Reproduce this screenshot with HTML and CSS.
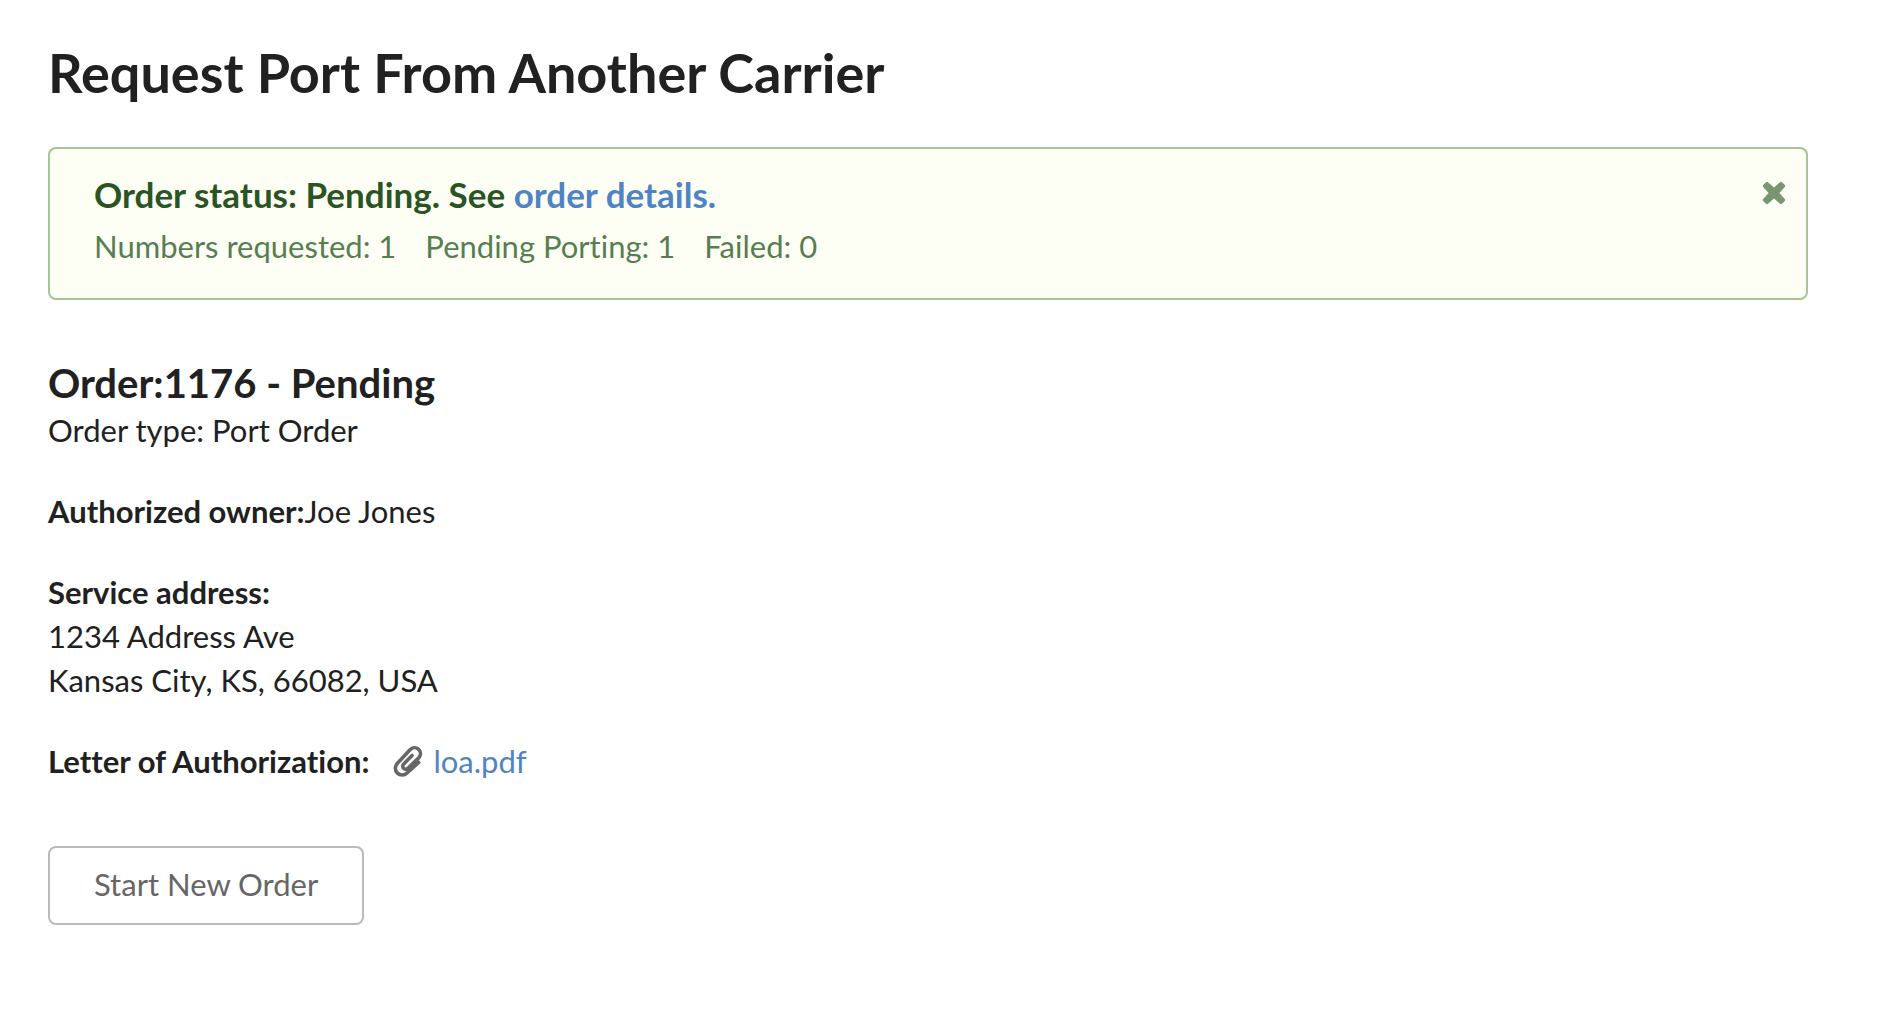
FILE: index.html
```html
<!DOCTYPE html>
<html lang="en">
<head>
<meta charset="utf-8">
<title>Request Port From Another Carrier</title>
<link rel="stylesheet" href="styles.css">
</head>
<body>
<main class="page">
  <h1 class="page-title">Request Port From Another Carrier</h1>
  <section class="message">
    <div class="message-body">
      <h2 class="message-header">Order status: Pending. See <a href="#details">order details.</a></h2>
      <p class="message-counts"><span>Numbers requested: 1</span><span>Pending Porting: 1</span><span>Failed: 0</span></p>
    </div>
    <button class="close" type="button" aria-label="Close">
      <svg viewBox="0 0 24 24" width="24" height="24" aria-hidden="true"><path d="M6 1.200 12 6.600 18 1.200Q19 .4 20 1.200L22.800 4Q23.600 5 22.800 6L17.400 12 22.800 18Q23.600 19 22.800 20L20 22.800Q19 23.600 18 22.800L12 17.400 6 22.800Q5 23.600 4 22.800L1.200 20Q.4 19 1.200 18L6.600 12 1.200 6Q.4 5 1.200 4L4 1.200Q5 .4 6 1.200Z"/></svg>
    </button>
  </section>
  <section class="order" id="details">
    <h2 class="order-title">Order:1176 - Pending</h2>
    <p class="block">Order type: Port Order</p>
    <p class="block"><strong>Authorized owner:</strong>Joe Jones</p>
    <address class="block"><strong>Service address:</strong><br>1234 Address Ave<br>Kansas City, KS, 66082, USA</address>
    <p class="block attachment"><strong>Letter of Authorization:</strong>
      <svg class="clip" viewBox="0 0 30 32" width="30" height="32" aria-hidden="true"><path stroke-width="3.6" d="M25.700 17.500 14 28A6.600 6.600 0 0 1 4.300 18.500L17 4.800A5.500 5.500 0 0 1 26 12.500L15 23.200A2.900 2.900 0 0 1 10.500 19.200L19 10.500"/></svg>
      <a href="#loa">loa.pdf</a></p>
  </section>
  <button class="start" type="button">Start New Order</button>
</main>
</body>
</html>
```

FILE: styles.css
```css
* { box-sizing: border-box; }
body { margin: 0; background: #fff; color: #212121; font: 31px/44px Lato, sans-serif; font-variant-ligatures: none; }
h1, h2, p { margin: 0; }
a { color: #5083c4; text-decoration: none; }
.page { padding: 39px 90px 40px 48px; }
.page-title { font-size: 54px; line-height: 68px; font-weight: 700; }
.message { display: flex; justify-content: space-between; margin-top: 40px; min-height: 153px; padding: 23px 20px 23px 44px; border: 2px solid #a9c399; border-radius: 8px; background: #fdfff5; color: #567e52; }
.message-header { color: #2a5423; font-size: 35px; line-height: 44px; }
.message-counts { display: flex; gap: 29px; margin-top: 8px; }
.close { align-self: flex-start; margin-top: 9px; padding: 0; border: 0; background: none; line-height: 0; cursor: pointer; }
.close svg { fill: #789672; }
.order { margin-top: 60px; }
.order-title { margin-bottom: 2px; font-size: 40px; line-height: 46px; }
.block { margin-bottom: 37px; font-style: normal; }
.attachment { display: flex; align-items: center; }
.clip { margin: 0 10px 0 24px; fill: none; stroke: #666; stroke-linecap: round; }
.start { margin-top: 26px; padding: 14px 44px 17px; border: 2px solid #bababa; border-radius: 8px; background: #fff; color: #666; font: inherit; cursor: pointer; }
```
